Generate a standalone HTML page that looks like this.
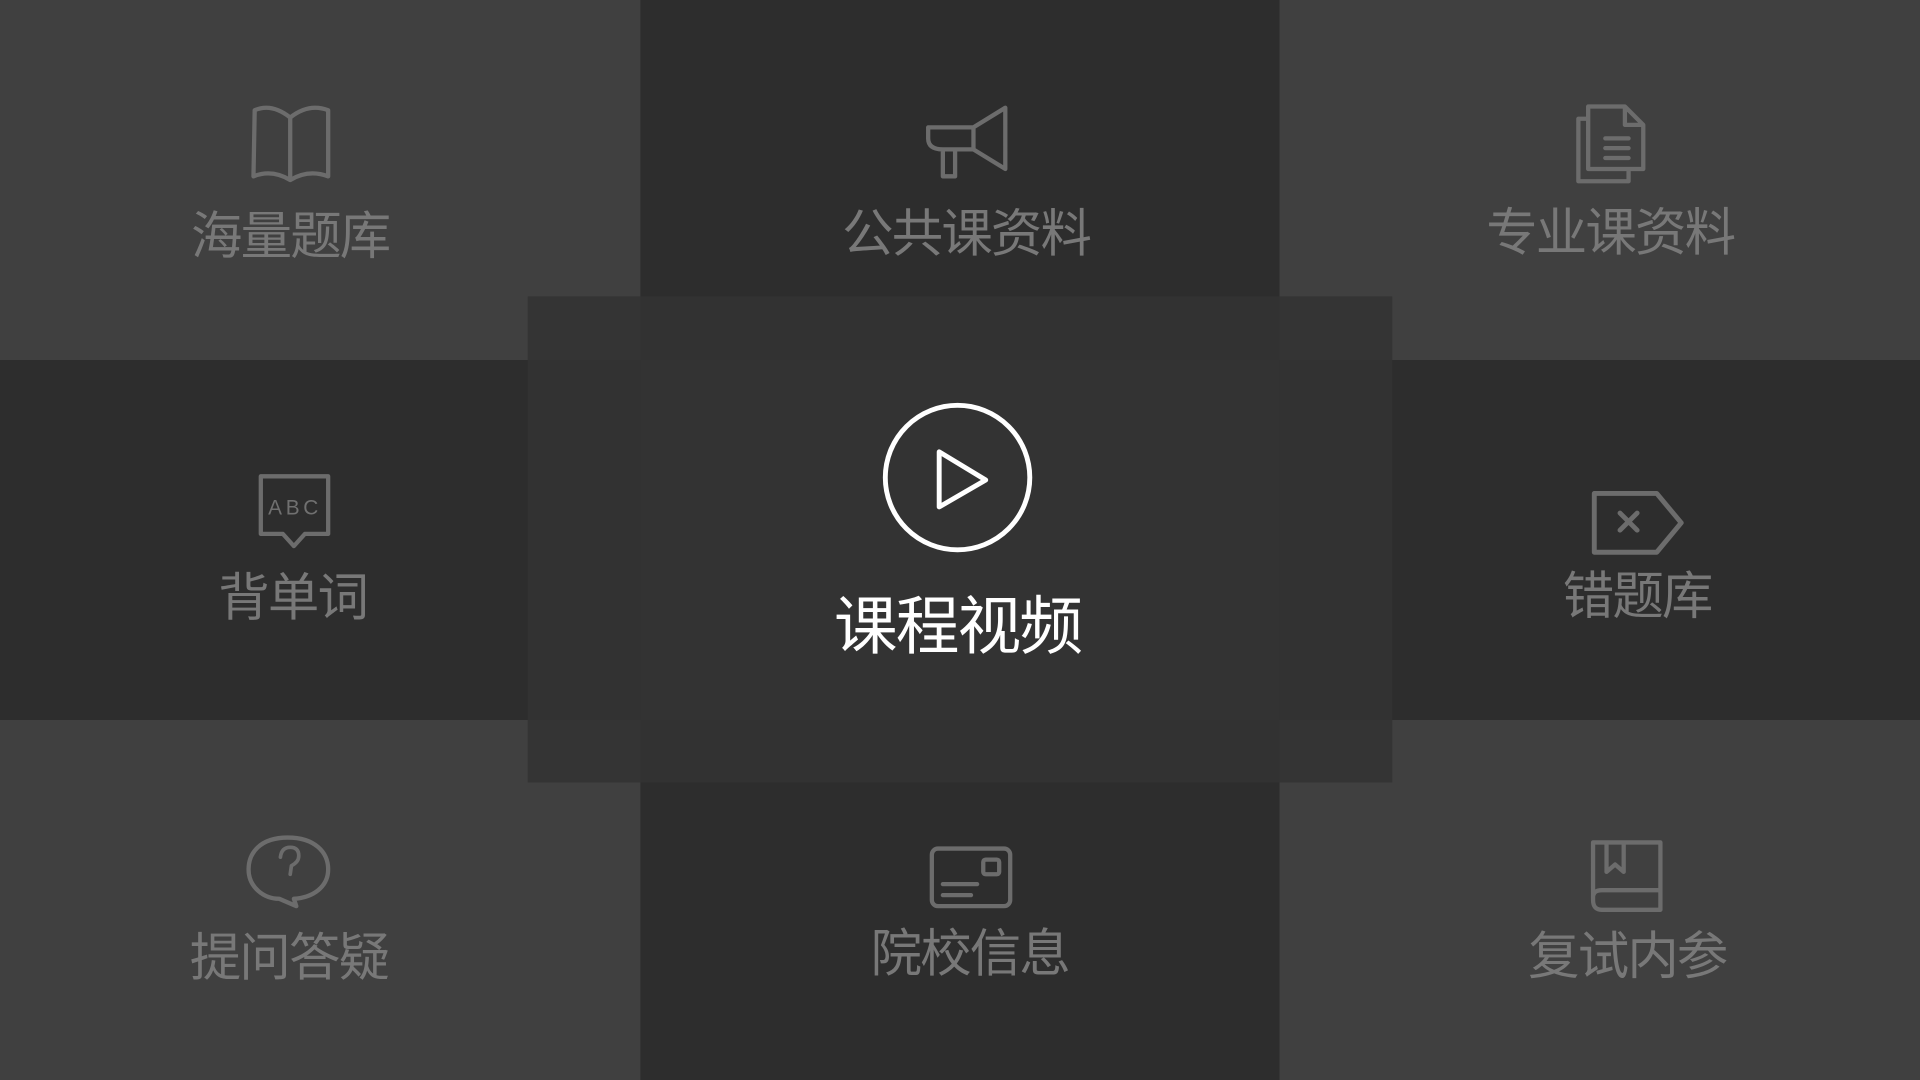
<!DOCTYPE html>
<html><head><meta charset="utf-8"><style>
html,body{margin:0;padding:0;background:#404040;overflow:hidden;width:1920px;height:1080px}
#s{position:absolute;left:0;top:0;width:1568px;height:882px;transform:scale(1.22449);transform-origin:0 0}
.c{position:absolute}
.t{position:absolute;transform:translate(-50%,-50%);font-family:"Liberation Sans","Noto Sans CJK SC",sans-serif;font-size:42px;color:#787878;white-space:nowrap;letter-spacing:-1.5px}
svg{position:absolute;left:0;top:0}
</style></head><body><div id="s">
<div class="c" style="left:0;top:0;width:523px;height:294px;background:#404040"></div>
<div class="c" style="left:523px;top:0;width:522px;height:294px;background:#2d2d2d"></div>
<div class="c" style="left:1045px;top:0;width:523px;height:294px;background:#404040"></div>
<div class="c" style="left:0;top:294px;width:523px;height:294px;background:#2d2d2d"></div>
<div class="c" style="left:523px;top:294px;width:522px;height:294px;background:#333"></div>
<div class="c" style="left:1045px;top:294px;width:523px;height:294px;background:#2d2d2d"></div>
<div class="c" style="left:0;top:588px;width:523px;height:294px;background:#404040"></div>
<div class="c" style="left:523px;top:588px;width:522px;height:294px;background:#2d2d2d"></div>
<div class="c" style="left:1045px;top:588px;width:523px;height:294px;background:#404040"></div>
<div class="c" style="left:431px;top:242px;width:706px;height:397px;background:rgba(51,51,51,0.9)"></div>
<svg width="1568" height="882" fill="none" stroke="#6c6c6c" stroke-width="3.5" stroke-linecap="round" stroke-linejoin="round">
<path d="M237 96 Q222 84 208 90 L207 144 Q222 138 237 147 Q252 138 268 144 L268 90 Q252 84 237 96 Z M237 96 L237 146"/>
<path d="M758 104 L795 104 L821 88 L821 138 L795 122 L770 122 Q758 122 758 113 Z M795 104 L795 122 M770 122 L770 144 L780 144 L780 122"/>
<path d="M1297 87 L1327 87 L1342 102 L1342 138 L1297 138 Z M1327 87 L1327 102 L1342 102 M1297 97 L1289 97 L1289 148 L1330 148 L1330 138 M1311 113 L1330 113 M1311 121 L1330 121 M1311 129 L1330 129"/>
<path d="M213 389 L268 389 L268 436 L249 436 L240 446 L231 436 L213 436 Z"/>
<path d="M1302 403 L1353 403 L1373 427 L1353 451 L1302 451 Z M1323 419 L1337 433 M1337 419 L1323 433" stroke-width="4"/>
<path d="M235 684 C212 684 203 697 203 710 C203 725 216 734 228 734 L242 740 L240 734 C256 733 268 724 268 710 C268 696 257 684 235 684 Z"/>
<path d="M229 700 Q230 692 237 692 Q244 692 244 699 Q244 704 238 707 L237 714" stroke-width="3"/>
<rect x="761" y="693" width="64" height="47" rx="5"/>
<rect x="803" y="702" width="13" height="12" rx="2"/>
<path d="M770 722 L798 722 M770 731 L793 731"/>
<path d="M1301 688 L1356 688 L1356 743 L1308 743 Q1301 743 1301 735 Z M1301 733 Q1301 727 1308 727 L1356 727 M1312 688 L1312 712 L1319 706 L1326 712 L1326 688"/>
<circle cx="782" cy="390" r="59" stroke="#fff" stroke-width="4"/>
<path d="M767 369 L805 392 L767 414 Z" stroke="#fff" stroke-width="4"/>
</svg>
<div class="t" style="left:219px;top:405px;font-size:17px;letter-spacing:3px;color:#707070;transform:none">ABC</div>
<div class="t" style="left:237px;top:190px">海量题库</div>
<div class="t" style="left:789px;top:188px">公共课资料</div>
<div class="t" style="left:1315px;top:187px">专业课资料</div>
<div class="t" style="left:239px;top:485px">背单词</div>
<div class="t" style="left:1337px;top:484px">错题库</div>
<div class="t" style="left:236px;top:779px">提问答疑</div>
<div class="t" style="left:792px;top:776px">院校信息</div>
<div class="t" style="left:1329px;top:778px">复试内参</div>
<div class="t" style="left:782px;top:507px;font-size:52px;color:#fff">课程视频</div>
</div></body></html>
